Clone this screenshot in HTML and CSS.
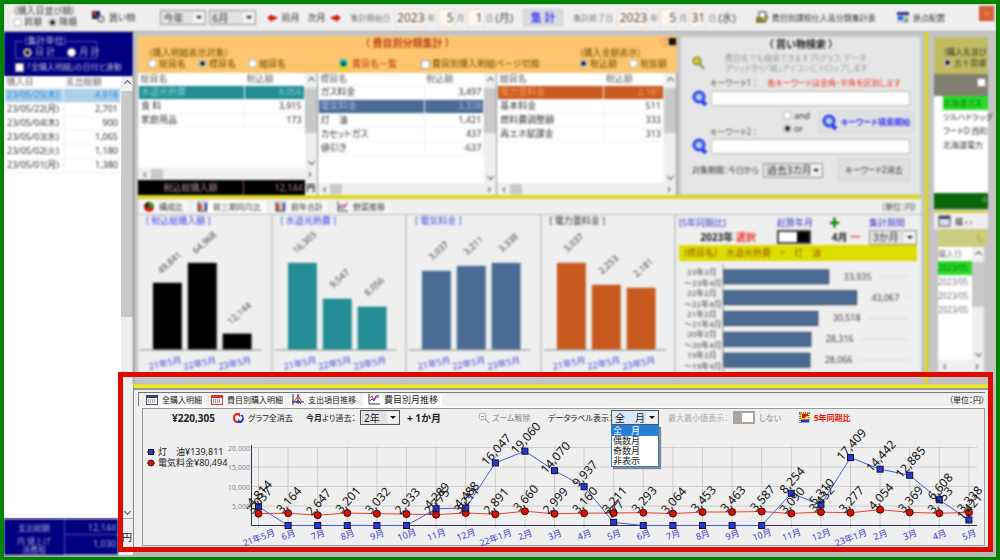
FILE: index.html
```html
<!DOCTYPE html>
<html lang="ja">
<head>
    <meta charset="UTF-8">
    <meta name="viewport" content="width=device-width, initial-scale=1.0">
    <title>家計簿 費目別集計</title>
    <link rel="stylesheet" href="styles.css">
</head>
<body>
<div class="app">
    <header class="topbar soft">
        <fieldset class="group order">
            <legend>（購入日並び順）</legend>
            <label><input type="radio" name="order">昇順</label>
            <label><input type="radio" name="order" checked>降順</label>
        </fieldset>
        <button class="link-btn shop">
            <svg width="13" height="13" viewBox="0 0 13 13"><rect width="8" height="8" fill="#223"/><rect x="1" y="1" width="3" height="3" fill="#d33"/><rect x="4" y="4" width="3" height="3" fill="#24d"/><circle cx="9" cy="8" r="3" fill="#ddd" stroke="#444"/></svg>
            買い物
        </button>
        <span class="pick year"><select aria-label="年"><option>今年</option></select></span>
        <span class="pick month"><select aria-label="月"><option>6月</option></select></span>
        <button class="link-btn prev"><svg width="11" height="8" viewBox="0 0 11 8"><path d="M0 4 5 0v2h2l4 2-4 2H5v2z" fill="#d61500"/></svg>前月</button>
        <button class="link-btn next">次月<svg width="11" height="8" viewBox="0 0 11 8"><path d="M11 4 6 0v2H4L0 4l4 2h2v2z" fill="#d61500"/></svg></button>
        <div class="date"><span>集計開始日</span><input class="y" value="2023" aria-label="開始年">年<input value="5" aria-label="開始月">月<input value="1" aria-label="開始日">日<b>(月)</b></div>
        <button class="calc">集 計</button>
        <div class="date"><span>集計終了日</span><input class="y" value="2023" aria-label="終了年">年<input value="5" aria-label="終了月">月<input value="31" aria-label="終了日">日<b>(水)</b></div>
        <button class="link-btn tax">
            <svg width="12" height="12" viewBox="0 0 12 12"><rect x="3" y="0" width="7" height="9" fill="#fff" stroke="#333"/><rect x="0" y="5" width="6" height="6" fill="#887a3a"/><path d="M6 8 10 3l2 2-4 6z" fill="#cc3" stroke="#333"/></svg>
            費目別課税仕入高分類集計表
        </button>
        <button class="link-btn reset">
            <svg width="12" height="12" viewBox="0 0 12 12"><rect width="12" height="11" fill="#ccd"/><rect width="12" height="3" fill="#337"/><rect x="1" y="4" width="5" height="4" fill="#26d"/><rect x="7" y="7" width="4" height="3" fill="#5a5"/></svg>
            原点配置
        </button>
        <button class="close" aria-label="閉じる">×</button>
    </header>

    <main class="workspace">
        <aside class="days">
            <div class="unit soft">
                <fieldset class="group">
                    <legend>（集計単位）</legend>
                    <label><input type="radio" name="unit" checked>日 計</label>
                    <label><input type="radio" name="unit">月 計</label>
                </fieldset>
                <label class="small"><input type="checkbox">「全購入明細」の日付と連動</label>
            </div>
            <div class="with-scroll">
                <table class="grid soft">
                    <thead><tr><th>購入日</th><th>支出総額</th></tr></thead>
                    <tbody>
                        <tr class="picked"><td>23/05/25(木)</td><td>4,918</td></tr>
                        <tr><td>23/05/22(月)</td><td>2,701</td></tr>
                        <tr><td>23/05/04(木)</td><td>900</td></tr>
                        <tr><td>23/05/03(水)</td><td>1,065</td></tr>
                        <tr><td>23/05/02(火)</td><td>1,180</td></tr>
                        <tr><td>23/05/01(月)</td><td>1,380</td></tr>
                    </tbody>
                </table>
                <div class="vscroll long"><i></i></div>
            </div>
            <div class="day-total">
                <dl class="soft">
                    <dt>支出総額</dt><dd>12,144</dd>
                    <dt>内 値上げ<br>消費税</dt><dd>1,030</dd>
                </dl>
                <span>円</span>
            </div>
        </aside>

        <section class="center soft">
            <div class="upper">
                <div class="category">
                    <div class="band">
                        <h2>（ 費目別分類集計 ）</h2>
                        <span class="marks">◁<i>■</i></span>
                        <fieldset class="group">
                            <legend>（購入明細表示対象）</legend>
                            <label><input type="radio" name="target">総目名</label>
                            <label><input type="radio" name="target" checked>標目名</label>
                            <label><input type="radio" name="target">細目名</label>
                        </fieldset>
                        <button class="link-btn list"><svg width="9" height="11" viewBox="0 0 9 11"><rect y="5" width="9" height="6" fill="#dd0"/><circle cx="4.500" cy="4" r="4" fill="#1bb"/><circle cx="4.500" cy="5" r="2" fill="#144"/></svg>費目名一覧</button>
                        <label class="page"><input type="checkbox">費目別購入明細ページ切換</label>
                        <fieldset class="group">
                            <legend>（購入金額表示）</legend>
                            <label><input type="radio" name="price" checked>税込額</label>
                            <label><input type="radio" name="price">税抜額</label>
                        </fieldset>
                    </div>
                    <div class="tables">
                        <div class="pane">
                            <div class="with-scroll">
                                <table class="grid">
                                    <thead><tr><th>総目名</th><th>税込額</th></tr></thead>
                                    <tbody>
                                        <tr class="teal"><td>水道光熱費</td><td>8,056</td></tr>
                                        <tr><td>食 料</td><td>3,915</td></tr>
                                        <tr><td>家庭用品</td><td>173</td></tr>
                                    </tbody>
                                </table>
                                <div class="vscroll"><i></i></div>
                            </div>
                            <div class="hscroll"><i></i></div>
                            <div class="sum"><span>税込総購入額</span><span>12,144</span><b>円</b></div>
                        </div>
                        <div class="pane">
                            <div class="with-scroll">
                                <table class="grid">
                                    <thead><tr><th>標目名</th><th>税込額</th></tr></thead>
                                    <tbody>
                                        <tr><td>ガス料金</td><td>3,497</td></tr>
                                        <tr class="blue"><td>電気料金</td><td>3,338</td></tr>
                                        <tr><td>灯　油</td><td>1,421</td></tr>
                                        <tr><td>カセットガス</td><td>437</td></tr>
                                        <tr><td>値引き</td><td>-637</td></tr>
                                    </tbody>
                                </table>
                                <div class="vscroll"><i></i></div>
                            </div>
                            <div class="hscroll"><i></i></div>
                        </div>
                        <div class="pane">
                            <div class="with-scroll">
                                <table class="grid">
                                    <thead><tr><th>細目名</th><th>税込額</th></tr></thead>
                                    <tbody>
                                        <tr class="orange"><td>電力量料金</td><td>2,181</td></tr>
                                        <tr><td>基本料金</td><td>511</td></tr>
                                        <tr><td>燃料費調整額</td><td>333</td></tr>
                                        <tr><td>再エネ賦課金</td><td>313</td></tr>
                                    </tbody>
                                </table>
                                <div class="vscroll"><i></i></div>
                            </div>
                            <div class="hscroll"><i></i></div>
                        </div>
                    </div>
                </div>

                <form class="search">
                    <h2>（ 買い物検索 ）</h2>
                    <div class="hint">
                        <svg width="14" height="14" viewBox="0 0 14 14"><circle cx="5" cy="5" r="4" fill="#cc2" stroke="#664"/><path d="M7 7l5 6" stroke="#885" stroke-width="2"/></svg>
                        <p>費目名でも検索できます 円グラフ、データ<br>グリッドから「縦」アイコンにドロップします</p>
                    </div>
                    <label for="key1">キーワード1 ：　<em>各キーワードは全角・半角を区別します</em></label>
                    <div class="key"><svg width="16" height="16" viewBox="0 0 16 16"><circle cx="7" cy="7" r="5" fill="#a9d3ee" stroke="#3142e8" stroke-width="3"/><path d="M10 11l4 4" stroke="#3142e8" stroke-width="4"/></svg><input id="key1"></div>
                    <div class="join">
                        <label for="key2">キーワード2 ：</label>
                        <div class="andor">
                            <label><input type="radio" name="join">and</label>
                            <label><input type="radio" name="join" checked>or</label>
                        </div>
                        <button type="button" class="go"><svg width="16" height="16" viewBox="0 0 16 16"><circle cx="7" cy="7" r="5" fill="#a9d3ee" stroke="#3142e8" stroke-width="3"/><path d="M10 11l4 4" stroke="#3142e8" stroke-width="4"/></svg>キーワード検索開始</button>
                    </div>
                    <div class="key"><svg width="16" height="16" viewBox="0 0 16 16"><circle cx="7" cy="7" r="5" fill="#a9d3ee" stroke="#3142e8" stroke-width="3"/><path d="M10 11l4 4" stroke="#3142e8" stroke-width="4"/></svg><input id="key2"></div>
                    <div class="range">
                        <label for="range">対象期間：今日から</label>
                        <span class="pick"><select id="range"><option>過去3カ月</option></select></span>
                        <button type="button">キーワード2消去</button>
                    </div>
                </form>
            </div>

            <div class="compare">
                <nav class="tabs">
                    <button><svg width="10" height="10" viewBox="0 0 10 10"><circle cx="5" cy="5" r="5" fill="#d11"/><path d="M5 5V0a5 5 0 0 1 5 5z" fill="#2a2"/><path d="M5 5H0a5 5 0 0 1 5-5z" fill="#222"/></svg>構成比</button>
                    <button class="on"><svg width="11" height="11" viewBox="0 0 11 11"><rect width="11" height="11" fill="#ccd"/><path d="M1 1v9h9" stroke="#333" fill="none"/><rect x="2" y="3" width="2" height="6" fill="#d22"/><rect x="5" y="5" width="2" height="4" fill="#dc2"/><rect x="8" y="2" width="2" height="7" fill="#23d"/></svg>前三期同月比</button>
                    <button><svg width="11" height="11" viewBox="0 0 11 11"><rect width="11" height="11" fill="#ccd"/><path d="M1 1v9h9" stroke="#333" fill="none"/><rect x="2" y="3" width="2" height="6" fill="#d22"/><rect x="5" y="5" width="2" height="4" fill="#dc2"/><rect x="8" y="2" width="2" height="7" fill="#23d"/></svg>前年合計</button>
                    <button><svg width="11" height="11" viewBox="0 0 11 11"><path d="M1 0v10h10" stroke="#333" fill="none"/><path d="M2 8l3-5 2 3 3-5" stroke="#d22" fill="none"/><path d="M2 4l3 4 5-4" stroke="#23d" fill="none"/></svg>野菜推移</button>
                    <span>（単位：円）</span>
                </nav>
                <div class="charts">
                    <figure><figcaption>[ 税込総購入額 ]</figcaption><svg class="bars" viewBox="0 0 133 146" data-values="49841,64968,12144" data-color="#000"></svg></figure>
                    <figure><figcaption>[ 水道光熱費 ]</figcaption><svg class="bars" viewBox="0 0 133 146" data-values="16303,9547,8056" data-color="#228d94"></svg></figure>
                    <figure><figcaption>[ 電気料金 ]</figcaption><svg class="bars" viewBox="0 0 133 146" data-values="3037,3211,3338" data-color="#4a6b94"></svg></figure>
                    <figure><figcaption class="plain">[ 電力量料金 ]</figcaption><svg class="bars" viewBox="0 0 133 146" data-values="3037,2253,2181" data-color="#c85a20"></svg></figure>
                    <div class="five">
                        <div class="five-head">
                            <span class="tag">[5年同期比]</span><span>起算年月</span><i class="plus">✚</i><label for="span">集計期間</label>
                            <strong>2023年 <em>選択</em></strong><span class="switch dark"></span><strong class="m">4月 <em>━</em></strong>
                            <span class="pick"><select id="span"><option>3か月</option></select></span>
                        </div>
                        <p class="path">[標目名]　水道光熱費　&gt;　灯　油</p>
                        <svg id="fiveYear" viewBox="0 0 240 112"></svg>
                    </div>
                </div>
            </div>
        </section>

        <aside class="stores soft">
            <div class="olive"><span>（購入先並び</span><label><input type="radio" name="store" checked>五十音順</label></div>
            <div class="gray"><input type="checkbox" aria-label="選択"></div>
            <ul class="names"><li class="hit">北海道ガス</li><li>ツルハドラッグ</li><li>フードD 西町</li><li>北海道電力</li></ul>
            <div class="green">⊜</div>
            <div class="store-tabs"><svg width="11" height="10" viewBox="0 0 11 10"><rect width="11" height="10" fill="#dde" stroke="#446"/><rect width="11" height="3" fill="#446"/></svg>購 ‹ ›</div>
            <div class="khaki">し</div>
            <div class="with-scroll">
                <ul class="dates"><li class="head">購入日</li><li class="hit">2023/05</li><li>2023/05</li><li>2023/05</li><li>2023/05</li></ul>
                <div class="vscroll"><i></i></div>
            </div>
            <div class="hscroll bare"></div>
        </aside>

        <section class="trend">
            <nav class="tabs">
                <button><svg width="12" height="10" viewBox="0 0 12 10"><rect x="0.500" y="0.500" width="11" height="9" fill="#fff" stroke="#457"/><rect width="12" height="3" fill="#346"/><path d="M2 5h8M2 7h8" stroke="#457" stroke-dasharray="1 1"/></svg>全購入明細</button>
                <button><svg width="12" height="10" viewBox="0 0 12 10"><rect x="0.500" y="0.500" width="11" height="9" fill="#fff" stroke="#d32"/><rect width="12" height="3" fill="#d32"/><path d="M2 5h8M2 7h8" stroke="#422" stroke-dasharray="1 1"/></svg>費目別購入明細</button>
                <button><svg width="12" height="11" viewBox="0 0 12 11"><path d="M1 0v11M0 8h12M6 0v10" stroke="#223" fill="none"/><path d="M2 8l4-6 4 6" stroke="#d22" fill="none"/><path d="M4 9l2-3 3 4" stroke="#23d" fill="none"/></svg>支出項目推移</button>
                <button class="on"><svg width="12" height="11" viewBox="0 0 12 11"><path d="M1 0v10h11" stroke="#333" fill="none"/><path d="M2 4l2-2 2 4 2-4 3-1" stroke="#d22" fill="none"/><path d="M2 7l2-2 2 2 2-4 3 0" stroke="#23d" fill="none"/></svg>費目別月推移</button>
                <span>（単位：円）</span>
            </nav>
            <div class="trend-body">
                <div class="tools">
                    <strong class="total">¥220,305</strong>
                    <button class="link-btn"><svg width="11" height="10" viewBox="0 0 11 10"><path d="M5 9Q1 9 1 5t4-4" fill="none" stroke="#d22" stroke-width="2"/><path d="M3 0h4v4z" fill="#d22"/><path d="M6 9q4 0 4-4" fill="none" stroke="#23d" stroke-width="2"/><path d="M5 6v4h4zM7 2l3 0 1 4z" fill="#23d"/></svg>グラフ全消去</button>
                    <label for="past"><b>今月</b>より過去：</label>
                    <span class="pick"><select id="past"><option>2年</option></select></span>
                    <strong class="total">+ 1か月</strong>
                    <button class="link-btn off"><svg width="12" height="12" viewBox="0 0 12 12"><circle cx="4.500" cy="4.500" r="3.500" fill="#fff" stroke="#aaa"/><path d="M3 4.500h3M7 7l4 4" stroke="#888" fill="none"/></svg>ズーム解除</button>
                    <label class="small" for="labels">データラベル表示：</label>
                    <span class="pick open">
                        <select id="labels"><option>全　月</option></select>
                        <ul class="menu"><li class="sel">全　月</li><li>偶数月</li><li>奇数月</li><li>非表示</li></ul>
                    </span>
                    <span class="faint">最大最小値表示：</span>
                    <span class="switch"></span>
                    <span class="muted">しない</span>
                    <button class="link-btn red"><svg width="11" height="11" viewBox="0 0 11 11"><rect x="1" y="1" width="9" height="9" fill="#fd2"/><path d="M1 0v11M0 1h11M10 1v9" stroke="#222" fill="none" stroke-dasharray="1 1"/><path d="M3 3h6M3 5h3M6 2v3" stroke="#d11" stroke-width="2" fill="none"/><path d="M2 9h8" stroke="#23d" stroke-width="3"/></svg>5年同期比</button>
                </div>
                <div class="plot">
                    <ul class="legend">
                        <li><svg width="8" height="8" viewBox="0 0 8 8"><path d="M0 4h8" stroke="#111"/><rect x="1.500" y="1.500" width="5" height="5" fill="#2a35dd" stroke="#111"/></svg>灯　油¥139,811</li>
                        <li><svg width="8" height="8" viewBox="0 0 8 8"><path d="M0 4h8" stroke="#111"/><circle cx="4" cy="4" r="3" fill="#d61500" stroke="#511"/></svg>電気料金¥80,494</li>
                    </ul>
                    <svg id="trend" viewBox="0 0 756 119"></svg>
                </div>
            </div>
        </section>
    </main>
    <div class="frame"></div>
</div>
<script src="charts.js"></script>
</body>
</html>
```
FILE: styles.css
```css
* {
    box-sizing: border-box;
}
body {
    margin: 0;
    font-family: "Noto Sans", "Noto Sans CJK JP", sans-serif;
    font-size: 9px;
    line-height: 12px;
    color: #333;
    font-feature-settings: "palt";
    white-space: nowrap;
}
h2, p, ul, dl, dd, figure {
    margin: 0;
    padding: 0;
    list-style: none;
}
em, i {
    font-style: normal;
}
button, select, input {
    font: inherit;
    color: inherit;
    font-feature-settings: inherit;
    margin: 0;
    padding: 0;
}
svg {
    display: block;
    flex: none;
    overflow: visible;
}
.app {
    position: relative;
    display: flex;
    flex-direction: column;
    min-height: 100vh;
    border: 4px solid #008400;
    background: #b8b8b8;
    overflow: hidden;
}
.soft {
    filter: blur(1px);
}
.small {
    font-size: 8px;
}

/* form parts */
input[type="radio"] {
    appearance: none;
    width: 9px;
    height: 9px;
    border: 1px solid #aaa;
    border-radius: 50%;
    background: #fff;
    flex: none;
}
input[type="radio"]:checked {
    background: radial-gradient(#111 35%, #ddd 55%);
}
input[type="checkbox"] {
    appearance: none;
    width: 9px;
    height: 9px;
    border: 1px solid #999;
    background: #fff;
    flex: none;
}
label {
    display: flex;
    align-items: center;
    gap: 2px;
}
.group {
    display: flex;
    gap: 6px;
    margin: 0;
    padding: 0 4px;
    border: 1px solid #ddd;
    min-width: 0;
}
.group legend {
    padding: 0;
    line-height: 10px;
}
.link-btn {
    display: flex;
    align-items: center;
    gap: 4px;
    border: 0;
    background: none;
}
.pick {
    position: relative;
    display: flex;
    height: 15px;
    border: 1px solid #999;
    background: #e2e2e2;
}
.pick select {
    appearance: none;
    border: 0;
    background: none;
    width: 100%;
    padding-left: 3px;
    font-size: 10px;
    line-height: 12px;
}
.pick::before {
    content: "";
    position: absolute;
    right: 1px;
    top: 1px;
    bottom: 1px;
    width: 11px;
    background: #f2f2f2;
    pointer-events: none;
}
.pick::after {
    content: "";
    position: absolute;
    right: 3px;
    top: 5px;
    border: 3px solid transparent;
    border-top-color: #111;
    pointer-events: none;
}
.switch {
    width: 22px;
    height: 13px;
    border: 2px solid #aaa49c;
    background: linear-gradient(90deg, #b0a8a0 40%, #fff 40%);
}
.switch.dark {
    width: 34px;
    height: 14px;
    border-color: #444;
    background: linear-gradient(90deg, #fff 60%, #000 60%);
}

/* scrollbars */
.with-scroll {
    display: flex;
    flex: 1;
    min-height: 0;
    background: #fff;
    align-items: stretch;
}
.vscroll {
    display: flex;
    flex-direction: column;
    justify-content: space-between;
    width: 12px;
    background: #efefef;
    margin-left: auto;
    flex: none;
}
.vscroll::before, .vscroll::after {
    content: "";
    width: 4px;
    height: 4px;
    margin: 5px 4px;
    border: solid #555;
    border-width: 1px 0 0 1px;
    transform: rotate(45deg);
}
.vscroll::after {
    transform: rotate(225deg);
    margin-bottom: 4px;
}
.vscroll i {
    height: 45px;
    background: #c9c9c9;
    margin-bottom: auto;
}
.vscroll.long i {
    height: 226px;
}
.hscroll {
    display: flex;
    align-items: center;
    justify-content: space-between;
    height: 12px;
    padding: 0 5px;
    background: #efefef;
}
.hscroll::before, .hscroll::after {
    content: "‹";
    font-size: 12px;
    color: #444;
}
.hscroll::after {
    content: "›";
}
.hscroll i {
    width: 12px;
    height: 10px;
    background: #c9c9c9;
    margin: 0 auto 0 4px;
}

/* data tables */
.grid {
    flex: 1;
    border-collapse: collapse;
    table-layout: fixed;
    align-self: flex-start;
    min-width: 0;
}
.grid th {
    height: 12px;
    padding: 0 2px;
    font-weight: normal;
    text-align: left;
    line-height: 11px;
    color: #666;
}
.grid th:first-child {
    width: 64%;
}
.days .grid th:first-child {
    width: 51%;
}
.grid td {
    height: 14px;
    padding: 0 2px;
    line-height: 12px;
    border: 1px solid #eef2f6;
}
.grid td:last-child {
    text-align: right;
}
.grid .picked td {
    background: #acd0e8;
    color: #2684d8;
}
.grid .teal td {
    background: #228d94;
    color: #7ed2d0;
}
.grid .blue td {
    background: #4a6b94;
    color: #a9b8e8;
}
.grid .orange td {
    background: #c85a20;
    color: #ff9a55;
}

/* top bar */
.topbar {
    display: flex;
    align-items: center;
    height: 28px;
    padding-left: 4px;
    background: #efefef;
    border-bottom: 1px solid #bbb;
}
.order {
    width: 68px;
}
.shop {
    margin-left: 16px;
}
.year {
    width: 46px;
    margin-left: 24px;
}
.month {
    width: 47px;
    margin-left: 3px;
}
.prev {
    margin-left: 11px;
}
.next {
    margin: 0 10px 0 8px;
}
.date {
    display: flex;
    align-items: center;
    gap: 2px;
    font-size: 8px;
    color: #777;
}
.date input {
    width: 17px;
    height: 18px;
    border: 1px solid #ddd;
    background: #fff6ec;
    font-size: 12px;
    color: #444;
    text-align: right;
}
.date input.y {
    width: 31px;
    margin-left: 2px;
}
.date b {
    font-size: 11px;
    font-weight: normal;
    color: #444;
}
.calc {
    width: 40px;
    height: 17px;
    margin: 0 10px;
    border: 1px solid #ccc;
    background: #dcdce0;
    font-size: 11px;
    font-weight: bold;
    color: #4040f0;
}
.tax {
    margin-left: 20px;
    font-size: 8px;
}
.reset {
    margin-left: auto;
    font-size: 8px;
}
.close {
    width: 15px;
    height: 15px;
    margin: 0 2px 8px 34px;
    border: 1px solid #b85030;
    background: #dc6038;
    color: #e8a080;
}

/* workspace */
.workspace {
    display: grid;
    grid-template-columns: 129px minmax(0, 1fr) 67px;
    grid-template-rows: 352px 1fr;
    flex: 1;
}
.days {
    grid-row: 1 / 3;
    display: flex;
    flex-direction: column;
    padding-bottom: 2px;
}
.unit {
    height: 44px;
    padding: 4px 0 0 11px;
    background: #000080;
    color: #b8b8d8;
}
.unit .group {
    width: 82px;
    height: 23px;
    gap: 12px;
    padding: 0 7px;
    border-color: #5050a8;
    margin-bottom: 2px;
}
.unit label {
    gap: 3px;
}
.day-total {
    display: flex;
    height: 37px;
    background: #efefef;
    border-top: 1px solid #aaa;
}
.day-total dl {
    display: grid;
    grid-template-columns: 60px 1fr;
    grid-template-rows: 16px 20px;
    width: 114px;
    background: #000080;
    color: #a8a8d0;
}
.day-total dt {
    font-size: 8px;
    line-height: 9px;
    text-align: center;
    align-self: center;
}
.day-total dd {
    padding: 3px 2px 0 0;
    text-align: right;
    border-left: 1px solid #5050a8;
    border-bottom: 1px solid #5050a8;
}
.day-total > span {
    padding: 12px 0 0 4px;
    font-size: 10px;
    color: #111;
}

.center {
    display: flex;
    flex-direction: column;
    padding: 4px 4px 7px 4px;
    background: #c4c4c8;
    border-left: 1px solid #888;
    border-right: 4px solid #dcd820;
}
.upper {
    display: flex;
    gap: 3px;
    height: 163px;
    border-bottom: 4px solid #dcd820;
}
.category {
    display: flex;
    flex-direction: column;
    flex: 1;
    min-width: 0;
}
.band {
    position: relative;
    display: flex;
    align-items: flex-end;
    height: 37px;
    padding: 0 5px 3px;
    background: #ffc56e;
    color: #6b5000;
}
.band h2 {
    position: absolute;
    left: 0;
    right: 0;
    top: 1px;
    text-align: center;
    font-size: 10px;
    line-height: 12px;
    color: #b84010;
}
.band .marks {
    position: absolute;
    right: 0;
    top: 0;
    color: #e84020;
}
.band .marks i {
    color: #111;
}
.band .group {
    height: 22px;
    gap: 12px;
    border-color: #e8c880;
}
.band .list {
    margin-left: 48px;
    color: #b84010;
}
.band .page {
    margin: 0 auto 0 24px;
}
.tables {
    display: grid;
    grid-template-columns: repeat(3, minmax(0, 1fr));
    flex: 1;
    min-height: 0;
}
.pane {
    display: flex;
    flex-direction: column;
    border-right: 1px solid #999;
}
.sum {
    display: grid;
    grid-template-columns: 106px 1fr 12px;
    height: 15px;
    line-height: 15px;
    background: #000;
    color: #b09090;
}
.sum span:first-child {
    text-align: center;
    border-right: 1px solid #855;
}
.sum span + span {
    text-align: right;
    padding-right: 2px;
}
.sum b {
    background: #efefef;
    color: #222;
    text-align: center;
}

/* search */
.search {
    width: 241px;
    padding: 1px 10px 0 11px;
    background: #e6e6e6;
    border: 1px solid #ccc;
}
.search h2 {
    font-size: 10px;
    line-height: 12px;
    text-align: center;
    color: #222;
}
.search > label {
    padding-left: 18px;
    height: 14px;
    font-size: 8px;
    color: #555;
}
.search em {
    color: #f03018;
}
.hint {
    display: flex;
    align-items: center;
    gap: 19px;
    height: 26px;
    font-size: 8px;
    line-height: 10px;
    color: #999;
}
.key {
    display: flex;
    align-items: center;
    gap: 3px;
}
.key input {
    flex: 1;
    height: 15px;
    border: 1px solid #bbb;
    background: #fff;
}
.join {
    display: grid;
    grid-template-columns: 68px 30px 96px;
    gap: 5px;
    align-items: center;
    height: 32px;
    padding-left: 18px;
}
.join > label {
    align-self: end;
    font-size: 8px;
    color: #555;
}
.andor {
    line-height: 13px;
}
.go {
    display: flex;
    align-items: center;
    justify-content: center;
    gap: 3px;
    height: 22px;
    border: 1px solid #d8d8d8;
    background: #e0e0e4;
    font-size: 8px;
    font-weight: bold;
    color: #3030f0;
}
.range {
    display: flex;
    align-items: center;
    gap: 4px;
    margin-top: 5px;
}
.range label {
    font-size: 8px;
}
.range .pick {
    width: 60px;
}
.range button {
    width: 72px;
    height: 22px;
    margin-left: auto;
    border: 1px solid #d0d0d0;
    background: #e0e0e0;
    font-size: 8px;
}

/* tabs and bar charts */
.tabs {
    display: flex;
    align-items: center;
    gap: 1px;
}
.tabs button {
    display: flex;
    align-items: center;
    gap: 5px;
    height: 12px;
    padding: 0 4px 0 2px;
    border: 0;
    background: #f6f6f6;
}
.tabs button.on {
    background: #fff;
}
.tabs span {
    margin-left: auto;
}
.compare {
    display: flex;
    flex-direction: column;
    flex: 1;
    background: #efefef;
}
.compare .tabs {
    height: 15px;
    padding: 0 4px;
    gap: 8px;
    font-size: 8px;
}
.charts {
    display: grid;
    grid-template-columns: repeat(4, minmax(0, 1fr)) 245px;
    flex: 1;
    border-top: 1px solid #bbb;
}
.charts figure {
    border-right: 2px solid #ccc;
}
.charts figcaption {
    padding-left: 8px;
    line-height: 11px;
    color: #4848e8;
}
.charts figcaption.plain {
    color: #333;
}
.charts svg {
    width: 100%;
    height: auto;
}
.five {
    padding: 1px 4px 0 3px;
}
.five-head {
    display: grid;
    grid-template-columns: 98px 46px 46px 1fr;
    align-items: center;
    height: 29px;
    color: #3838c0;
}
.five-head strong {
    text-align: center;
    font-size: 10px;
    color: #222;
}
.five-head em {
    color: #f03030;
}
.five-head .pick {
    color: #333;
}
.plus {
    color: #087808;
    padding-left: 6px;
    font-size: 11px;
}
.path {
    height: 16px;
    padding-left: 5px;
    background: #dede00;
    line-height: 16px;
    color: #a06000;
}
.five svg {
    margin-top: 1px;
}

/* right column */
.stores {
    display: flex;
    flex-direction: column;
    padding: 5px 8px 12px 5px;
    background: #c4c4c8;
    font-size: 8px;
    overflow: hidden;
}
.olive {
    height: 37px;
    padding: 9px 0 0 9px;
    background: #c0bb60;
    line-height: 11px;
}
.gray {
    height: 22px;
    padding: 4px 0 0 43px;
    background: #808070;
}
.names {
    height: 97px;
    padding-left: 9px;
    background: #fff;
}
.names li, .dates li {
    height: 14px;
    line-height: 14px;
}
.hit {
    background: #28dc28;
    color: #087808;
}
.green {
    height: 16px;
    background: #0c660c;
    color: #7a7;
    text-align: right;
}
.store-tabs {
    display: flex;
    gap: 5px;
    height: 18px;
    padding: 3px 5px 0;
    border-top: 2px solid #dcd820;
    margin-top: 2px;
    background: #efefef;
}
.khaki {
    height: 18px;
    margin-left: 4px;
    padding-right: 4px;
    background: #cccc80;
    color: #a08020;
    text-align: right;
    line-height: 18px;
}
.stores .with-scroll {
    margin: 0 4px;
}
.dates {
    width: 35px;
    color: #777;
}
.bare {
    margin: 0 4px;
}

/* monthly trend */
.trend {
    grid-column: 2 / 4;
    display: flex;
    flex-direction: column;
    margin: 0 3px 5px 0;
    padding: 4px 8px 6px 4px;
    border-left: 1px solid #888;
    border-top: 4px solid #eeea20;
    background: #efefef;
    box-shadow: inset 0 2px #999;
    color: #222;
}
.trend .tabs {
    height: 14px;
    padding-left: 5px;
    border-top: 1px solid #777;
    border-left: 1px solid #777;
    font-size: 8px;
}
.trend .tabs button {
    gap: 4px;
    margin-right: 2px;
}
.trend .tabs .on {
    padding-left: 5px;
    font-size: 9px;
}
.trend .tabs span {
    color: #111;
}
.trend-body {
    flex: 1;
    margin: 2px 0 0 4px;
    border: 1px solid #999;
    box-shadow: 0 -2px #fff;
}
.tools {
    display: grid;
    grid-template-columns: 61px 73px 54px 47px 71px 70px 63px 57px 65px 26px 40px 1fr;
    align-items: center;
    height: 17px;
    padding-left: 29px;
    font-size: 8px;
}
.tools label {
    gap: 0;
}
.tools .pick {
    width: 40px;
    border-color: #555;
}
.tools .open {
    width: 48px;
    background: #d8e8f8;
}
.tools .total {
    font-size: 10px;
}
.menu {
    position: absolute;
    left: -1px;
    top: 14px;
    z-index: 2;
    width: 48px;
    border: 1px solid #2680d8;
    background: #fff;
    box-shadow: 2px 2px 1px #888;
    font-size: 9px;
    line-height: 10px;
}
.menu li {
    padding-left: 1px;
}
.menu .sel {
    background: #2680d8;
    color: #fff;
}
.off, .muted {
    color: #888;
}
.off {
    gap: 2px;
}
.faint {
    color: #aaa;
}
.red {
    color: #e81808;
    font-weight: bold;
}
.plot {
    display: flex;
    align-items: flex-start;
}
.legend {
    width: 85px;
    padding: 20px 0 0 4px;
    font-size: 9px;
    line-height: 11px;
    flex: none;
}
.legend li {
    display: flex;
    align-items: center;
    gap: 3px;
}
#trend {
    flex: 1;
    min-width: 0;
}

/* drawn chart text */
.axis {
    font-size: 9px;
    fill: #4040d8;
    text-anchor: middle;
}
.scale {
    font-size: 7px;
    fill: #888;
    text-anchor: end;
}
.value {
    font-size: 12px;
    fill: #111;
    text-anchor: middle;
}
.bars .value, #fiveYear text {
    font-size: 9px;
    fill: #444;
}
#fiveYear .name {
    font-size: 8px;
    text-anchor: end;
}

.frame {
    position: absolute;
    left: 114px;
    top: 368px;
    right: 3px;
    bottom: 5px;
    border: 5px solid #dc0c00;
    pointer-events: none;
}
```
FILE: charts.js
```js
function add(parent, name, attrs, text) {
    const node = document.createElementNS('http://www.w3.org/2000/svg', name);
    for (const key in attrs) node.setAttribute(key, attrs[key]);
    if (text !== undefined) node.textContent = text;
    parent.appendChild(node);
    return node;
}

function slanted(parent, x, y, angle, cls, text) {
    add(parent, 'text', { class: cls, transform: `translate(${x} ${y}) rotate(${angle})`, y: 4 }, text);
}

// Three year bars
document.querySelectorAll('.bars').forEach(svg => {
    const values = svg.dataset.values.split(',').map(Number);
    const max = Math.max(...values);
    const base = 124;
    values.forEach((value, i) => {
        const x = 15 + i * 35;
        const h = Math.round(value / max * 87);
        add(svg, 'rect', { x, y: base - h, width: 29, height: h, fill: svg.dataset.color });
        slanted(svg, x + 16, base - h - 21, -42, 'value', value.toLocaleString('en-US'));
        slanted(svg, x + 12, base + 13, -12, 'axis', `${21 + i}年5月`);
    });
    add(svg, 'path', { d: `M2 ${base}.5H124`, stroke: '#888' });
});

// Same period over five years
const five = document.getElementById('fiveYear');
[33935, 43067, 30518, 28316, 28066].forEach((value, i) => {
    const y = 8 + i * 21;
    const w = Math.round(value / 43067 * 134);
    add(five, 'path', { d: `M46 ${y + 7}H232`, stroke: '#ddd' });
    add(five, 'rect', { x: 45, y, width: w, height: 14, fill: '#4a6b94', stroke: '#345' });
    add(five, 'rect', { x: 48 + w, y, width: 46, height: 14, fill: '#efefef' });
    add(five, 'text', { x: w + 60, y: y + 10 }, value.toLocaleString('en-US'));
    add(five, 'text', { class: 'name', x: 38, y: y + 5 }, `${23 - i}年2月`);
    add(five, 'text', { class: 'name', x: 43, y: y + 16 }, `～${23 - i}年4月`);
});
add(five, 'path', { d: 'M44.5 2V112', stroke: '#888' });

// Monthly trend
const oil = [4814, 0, 0, 0, 0, 0, 4289, 4488, 16047, 19060, 14070, 9937, 777, 0, 0, 0, 0, 0, 8254, 5310, 17409, 14442, 12885, 6608, 1421];
const power = [3037, 3164, 2647, 3201, 3032, 2933, 2775, 3211, 2891, 3660, 2999, 3160, 3211, 3293, 3064, 3453, 3463, 3587, 3090, 3432, 3277, 4054, 3369, 3153, 3338];
const trend = document.getElementById('trend');
const px = i => 30.5 + i * 29.6;
const py = v => 99.5 - v / 20000 * 78;

for (let v = 5000; v <= 20000; v += 5000) {
    add(trend, 'path', { d: `M23 ${py(v)}H749`, stroke: '#ccc' });
    add(trend, 'text', { class: 'scale', x: 22, y: py(v) + 3 }, v.toLocaleString('en-US'));
}
oil.forEach((v, i) => {
    add(trend, 'path', { d: `M${px(i)} 20V102`, stroke: '#ccc' });
    const month = (i + 4) % 12 + 1;
    const name = (i === 0 ? '21年' : month === 1 ? `${21 + (i + 4) / 12}年` : '') + month + '月';
    slanted(trend, px(i), name.length > 3 ? 111 : 108, -20, 'axis', name);
});
add(trend, 'path', { d: 'M23.5 19V99.5H749', stroke: '#335', fill: 'none' });
add(trend, 'path', { d: 'M' + power.map((v, i) => `${px(i)} ${py(v)}`).join('L'), stroke: '#f04030', fill: 'none' });
add(trend, 'path', { d: 'M' + oil.map((v, i) => `${px(i)} ${py(v)}`).join('L'), stroke: '#4a5ce0', fill: 'none' });
power.forEach((v, i) => add(trend, 'circle', { cx: px(i), cy: py(v), r: 3.5, fill: '#d61500', stroke: '#400' }));
oil.forEach((v, i) => add(trend, 'rect', { x: px(i) - 3, y: py(v) - 3, width: 6, height: 6, fill: '#2a35dd', stroke: '#112' }));
[power, oil].forEach(list => list.forEach((v, i) => {
    if (v) slanted(trend, px(i) + 1, py(v) - 13, -48, 'value', v.toLocaleString('en-US'));
}));
```
